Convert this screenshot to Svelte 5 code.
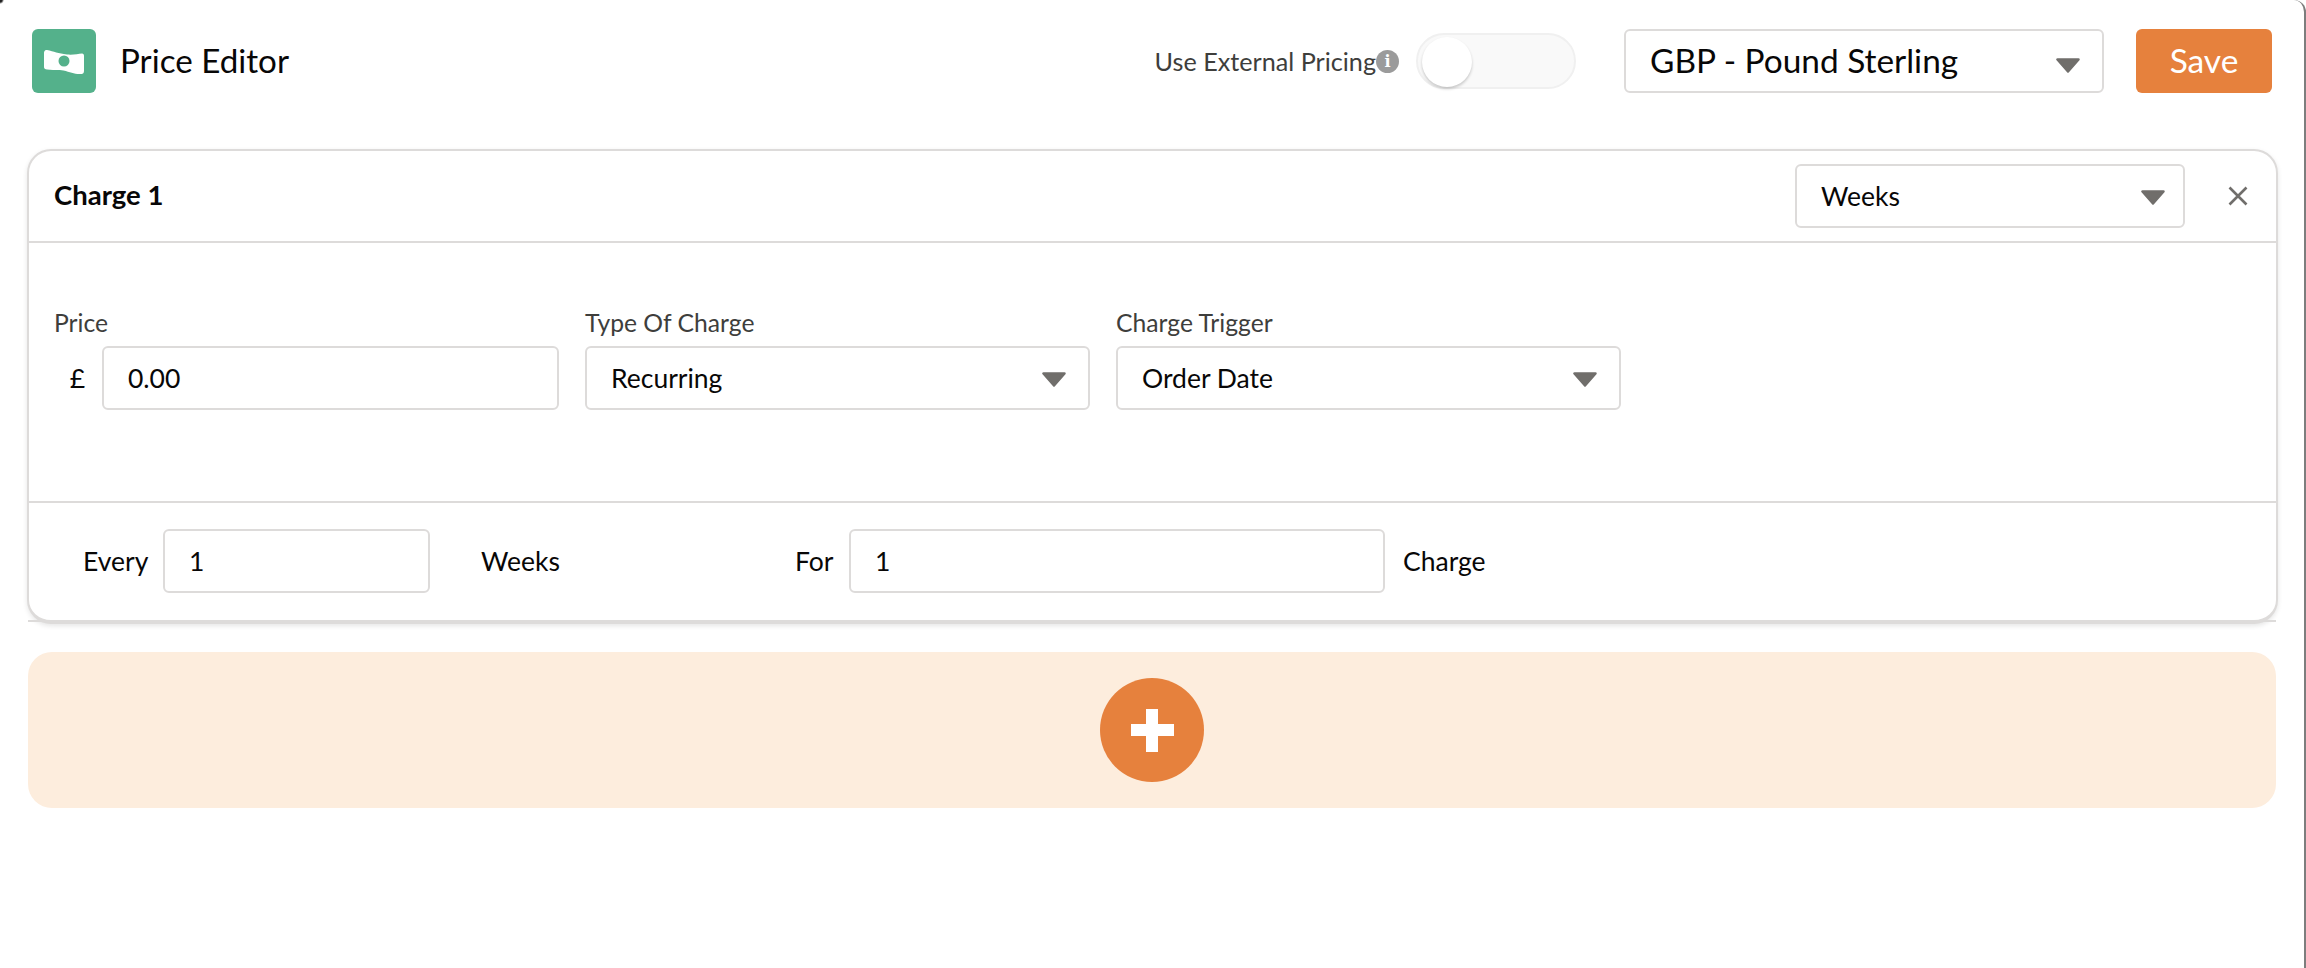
<script>
  const fields = [
    { label: 'Type Of Charge', value: 'Recurring' },
    { label: 'Charge Trigger', value: 'Order Date' }
  ];
</script>

{#snippet caret()}
  <svg class="caret" viewBox="0 0 24 15" width="24" height="15" aria-hidden="true">
    <path d="M1.500 1.500h21L12 13.500z" fill="#706e6b" stroke="#706e6b" stroke-width="2.500" stroke-linejoin="round" />
  </svg>
{/snippet}

<div class="page">
  <header class="top">
    <div class="brand">
      <span class="logo">
        <svg viewBox="0 0 64 64" width="64" height="64" aria-hidden="true">
          <path d="M12 24c0-2 1-3.500 3-3 7 1.500 11 3.500 20 4.500 6 .5 11-.5 15-1 1.500 0 2 1 2 2.500v15c0 2-1 3-2.500 3-7 .5-11-2-18-3.500-6-1.200-11 0-16.500-1-2-.3-3-1-3-2.500z" fill="#fff" />
          <circle cx="32" cy="32" r="5.500" fill="#54b18b" />
        </svg>
      </span>
      <h1>Price Editor</h1>
    </div>
    <div class="controls">
      <span class="ext">Use External Pricing</span>
      <span class="info">i</span>
      <span class="toggle"><span class="knob"></span></span>
      <div class="select currency"><span>GBP - Pound Sterling</span>{@render caret()}</div>
      <button class="save">Save</button>
    </div>
  </header>

  <section class="card">
    <div class="card-head">
      <h2>Charge 1</h2>
      <div class="select period"><span>Weeks</span>{@render caret()}</div>
      <svg class="close" viewBox="0 0 20 20" width="20" height="20" aria-hidden="true">
        <path d="M1.500 1.500l17 17M18.500 1.500l-17 17" stroke="#706e6b" stroke-width="2.600" fill="none" />
      </svg>
    </div>
    <div class="card-body">
      <div class="field price">
        <span class="label">Price</span>
        <div class="price-row">
          <span class="cur">£</span>
          <input class="input" value="0.00" />
        </div>
      </div>
      {#each fields as f}
        <div class="field wide">
          <span class="label">{f.label}</span>
          <div class="select"><span>{f.value}</span>{@render caret()}</div>
        </div>
      {/each}
    </div>
    <div class="card-foot">
      <span class="every">Every</span>
      <input class="input n1" value="1" />
      <span class="unit">Weeks</span>
      <span class="for">For</span>
      <input class="input n2" value="1" />
      <span class="charge">Charge</span>
    </div>
  </section>
  <div class="rule"></div>

  <div class="add">
    <span class="plus"><i></i></span>
  </div>
</div>

<style>
  :global(body) {
    margin: 0;
    background: #fff;
  }
  .page {
    box-sizing: border-box;
    width: 2306px;
    height: 968px;
    padding: 29px 26px 0 27px;
    border-right: 2px solid #7d7d7d;
    border-top-right-radius: 12px;
    background: radial-gradient(circle at 0 0, #222 2px, transparent 4px), #fff;
    font-family: Lato, "Liberation Sans", sans-serif;
    color: #080707;
    font-size: 26.500px;
    overflow: hidden;
  }
  .top {
    display: flex;
    justify-content: space-between;
    align-items: center;
    height: 64px;
    padding: 0 6px 0 5px;
  }
  .brand {
    display: flex;
    align-items: center;
    gap: 24px;
  }
  .logo {
    display: block;
    width: 64px;
    height: 64px;
    background: #54b18b;
    border-radius: 6px;
  }
  .logo svg { display: block; }
  h1 {
    margin: 0 0 2px;
    font-size: 33.200px;
    font-weight: 400;
  }
  .controls {
    display: flex;
    align-items: center;
  }
  .ext {
    font-size: 25.200px;
    color: #3e3e3c;
  }
  .info {
    width: 23px;
    height: 23px;
    border-radius: 50%;
    background: #9b9b9b;
    color: #fff;
    font: 700 16px/23px "DejaVu Serif", serif;
    text-align: center;
  }
  .toggle {
    box-sizing: border-box;
    display: block;
    width: 160px;
    height: 56px;
    margin: 0 48px 0 17px;
    padding: 2px 0 0 4px;
    border: 2px solid #f0f0f0;
    border-radius: 28px;
    background: #f9f9f9;
  }
  .knob {
    display: block;
    width: 50px;
    height: 50px;
    border-radius: 50%;
    background: #fff;
    box-shadow: 0 2px 3px rgba(0, 0, 0, 0.2);
  }
  .select {
    box-sizing: border-box;
    display: flex;
    align-items: center;
    justify-content: space-between;
    height: 64px;
    padding: 0 22px 0 24px;
    background: #fff;
    border: 2px solid #dddbda;
    border-radius: 6px;
  }
  .caret {
    display: block;
    margin-top: 2px;
  }
  .currency {
    width: 480px;
    font-size: 33.400px;
  }
  .currency span { margin-bottom: 2px; }
  .currency .caret { margin-top: 8px; }
  .save {
    width: 136px;
    height: 64px;
    margin-left: 32px;
    padding: 0 0 3px;
    border: 0;
    border-radius: 6px;
    background: #e6813d;
    color: #fff;
    font: 400 33.500px Lato, sans-serif;
  }
  .card {
    box-sizing: border-box;
    height: 475px;
    margin-top: 56px;
    border: 2px solid #dddbda;
    border-bottom-width: 4px;
    border-radius: 24px;
    box-shadow: 0 2px 5px rgba(0, 0, 0, 0.1);
    background: #fff;
  }
  .card-head {
    display: flex;
    align-items: center;
    box-sizing: border-box;
    height: 92px;
    padding: 0 28px 0 25px;
    border-bottom: 2px solid #dddbda;
  }
  h2 {
    margin: 0 auto 3px 0;
    font-size: 27.500px;
    font-weight: 700;
  }
  .period {
    width: 390px;
    padding-right: 18px;
  }
  .close {
    margin-left: 43px;
  }
  .card-body {
    box-sizing: border-box;
    display: flex;
    gap: 26px;
    height: 260px;
    padding: 65px 0 0 25px;
    border-bottom: 2px solid #dddbda;
  }
  .field {
    display: flex;
    flex-direction: column;
  }
  .label {
    height: 38px;
    line-height: 30px;
    font-size: 24.700px;
    color: #3e3e3c;
  }
  .price { width: 505px; }
  .wide { width: 505px; }
  .price-row {
    display: flex;
    align-items: center;
    justify-content: flex-end;
  }
  .cur { margin-right: 17px; }
  .input {
    box-sizing: border-box;
    height: 64px;
    padding: 0 24px;
    border: 2px solid #dddbda;
    border-radius: 6px;
    outline: 0;
    background: #fff;
    color: #080707;
    font: 400 26.500px Lato, sans-serif;
  }
  .price-row .input { width: 457px; }
  .card-foot {
    display: flex;
    align-items: center;
    height: 115px;
    padding-left: 54px;
  }
  .every { width: 80px; }
  .n1 { width: 267px; }
  .unit { width: 314px; margin-left: 51px; }
  .for { width: 54px; }
  .n2 { width: 536px; }
  .charge { margin-left: 18px; }
  .rule {
    height: 2px;
    margin: -4px 2px 0 1px;
    background: #dddbda;
  }
  .add {
    display: flex;
    align-items: center;
    justify-content: center;
    height: 156px;
    margin: 30px 2px 0 1px;
    background: #fdeddd;
    border-radius: 24px;
  }
  .plus {
    display: flex;
    align-items: center;
    justify-content: center;
    width: 104px;
    height: 104px;
    border-radius: 50%;
    background: #e6813d;
  }
  .plus i {
    display: block;
    width: 43px;
    height: 43px;
    background:
      linear-gradient(#fff, #fff) center / 12px 100% no-repeat,
      linear-gradient(#fff, #fff) center / 100% 12px no-repeat;
  }
</style>
